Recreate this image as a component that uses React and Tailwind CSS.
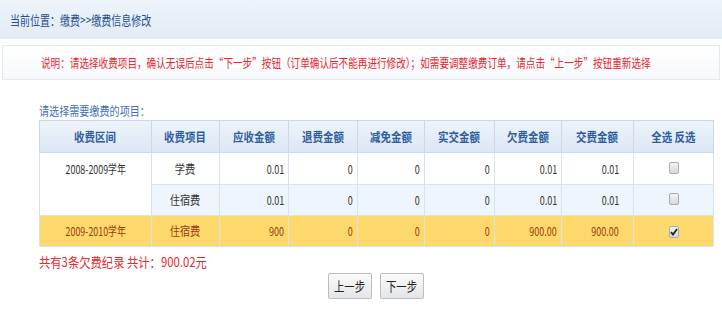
import { useState } from "react";

const cols = [
  { label: "收费区间", w: "w-[112px]" },
  { label: "收费项目", w: "w-[68px]" },
  { label: "应收金额", w: "w-[69px]" },
  { label: "退费金额", w: "w-[69px]" },
  { label: "减免金额", w: "w-[67px]" },
  { label: "实交金额", w: "w-[70px]" },
  { label: "欠费金额", w: "w-[67px]" },
  { label: "交费金额", w: "w-[72px]" },
  { label: "全选 反选", w: "w-[80px]" },
];

const rows = [
  { id: 1, term: "2008-2009学年", span: 2, item: "学费", vals: ["0.01", "0", "0", "0", "0.01", "0.01"], checked: false },
  { id: 2, item: "住宿费", vals: ["0.01", "0", "0", "0", "0.01", "0.01"], checked: false, alt: true },
  { id: 3, term: "2009-2010学年", span: 1, item: "住宿费", vals: ["900", "0", "0", "0", "900.00", "900.00"], checked: true, hi: true },
];

// the old page font is narrow, squeeze glyphs horizontally
const Narrow = ({ children, origin = "origin-center", k = "scale-x-[0.78]" }) => (
  <span className={`inline-block whitespace-nowrap ${k} ${origin}`}>{children}</span>
);

const Check = ({ checked }) => (
  <span className="inline-flex w-[10px] h-[12px] items-center justify-center rounded-[2px] border border-[#a9adb3] bg-gradient-to-b from-[#f4f4f4] to-[#d6d8db]">
    {checked && (
      <svg width="8" height="8" viewBox="0 0 8 8">
        <path d="M1 4.2 L3 6.5 L7 1" stroke="#222" strokeWidth="1.8" fill="none" />
      </svg>
    )}
  </span>
);

export default function App() {
  const [data] = useState(rows);

  return (
    <div className="w-[722px] h-[313px] bg-white text-[12px] font-['Noto_Sans_CJK_SC','Noto_Sans',sans-serif]">
      {/* location bar */}
      <div className="h-[39px] flex items-center pl-[10px] bg-gradient-to-b from-[#eef3fa] to-[#e3ebf6] text-[#24508f] text-[13px]">
        <Narrow origin="origin-left" k="scale-x-[0.77]">当前位置：缴费&gt;&gt;缴费信息修改</Narrow>
      </div>

      {/* notice */}
      <div className="mt-[6px] mx-[2px] h-[35px] flex items-center pl-[38px] border border-[#e4e9f0] bg-gradient-to-b from-white to-[#f6f8fb] text-[#e8262f] text-[12px]">
        <Narrow origin="origin-left" k="scale-x-[0.8]">
          说明：请选择收费项目，确认无误后点击“下一步”按钮（订单确认后不能再进行修改）；如需要调整缴费订单，请点击“上一步”按钮重新选择
        </Narrow>
      </div>

      <div className="pl-[39px] pt-[23px]">
        <div className="text-[#3d6fb6] leading-[16px] h-[17px]">
          <Narrow origin="origin-left" k="scale-x-[0.84]">请选择需要缴费的项目：</Narrow>
        </div>

        <table className="border-collapse w-[674px] table-fixed">
          <thead>
            <tr className="h-[32px] bg-gradient-to-b from-[#edf3fb] to-[#dbe7f5]">
              {cols.map((c) => (
                <th key={c.label} className={`${c.w} border border-[#c9d9ec] text-[#2d5c9e] font-bold text-[12px] text-center`}>
                  <Narrow k="scale-x-[0.87]">{c.label}</Narrow>
                </th>
              ))}
            </tr>
          </thead>
          <tbody>
            {data.map((r) => (
              <tr
                key={r.id}
                className={`${r.id === 1 ? "h-[32px]" : "h-[31px]"} ${
                  r.hi ? "bg-[#fdd96b] text-[#9a3a12]" : r.alt ? "bg-[#eef5fc] text-[#333]" : "bg-white text-[#333]"
                }`}
              >
                {r.term && (
                  <td rowSpan={r.span} className={`border border-[#d7e3f0] text-center ${r.hi ? "align-middle" : "bg-white align-top pt-[7px]"}`}>
                    <Narrow k="scale-x-[0.74]">{r.term}</Narrow>
                  </td>
                )}
                <td className="border border-[#d7e3f0] text-center">
                  <Narrow k="scale-x-[0.85]">{r.item}</Narrow>
                </td>
                {r.vals.map((v, i) => (
                  <td key={i} className={`border border-[#d7e3f0] text-right ${i === 5 ? "pr-[14px]" : "pr-[4px]"}`}>
                    <Narrow origin="origin-right" k="scale-x-[0.75]">{v}</Narrow>
                  </td>
                ))}
                <td className="border border-[#d7e3f0] text-center">
                  <Check checked={r.checked} />
                </td>
              </tr>
            ))}
          </tbody>
        </table>

        <div className="mt-[5px] text-[#e8262f] text-[13px]">
          <Narrow origin="origin-left" k="scale-x-[0.87]">共有3条欠费纪录 共计：900.02元</Narrow>
        </div>

        <div className="flex gap-[8px] ml-[289px] mt-[1px]">
          <button className="w-[44px] h-[26px] border border-[#b9bcc0] rounded-[2px] bg-gradient-to-b from-[#fbfbfb] to-[#e4e5e7] text-[#222] text-[13px]">
            <Narrow k="scale-x-[0.8]">上一步</Narrow>
          </button>
          <button className="w-[44px] h-[26px] border border-[#b9bcc0] rounded-[2px] bg-gradient-to-b from-[#fbfbfb] to-[#e4e5e7] text-[#222] text-[13px]">
            <Narrow k="scale-x-[0.8]">下一步</Narrow>
          </button>
        </div>
      </div>
    </div>
  );
}
